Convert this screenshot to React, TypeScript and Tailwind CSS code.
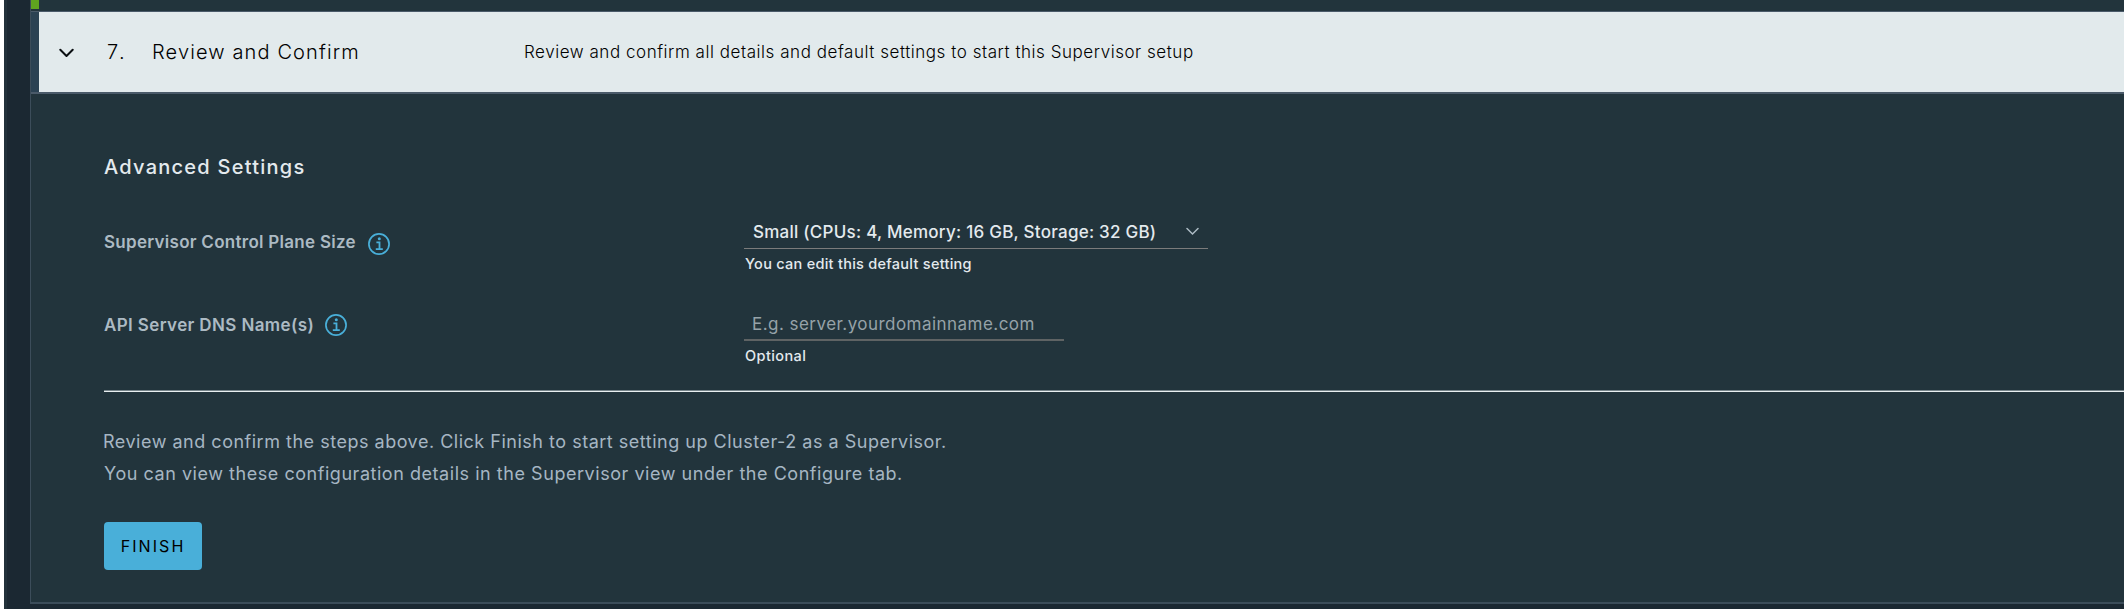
import type { ReactNode } from "react";

function InfoIcon() {
  return (
    <svg className="h-[22px] w-[22px] shrink-0" viewBox="0 0 22 22" fill="none" stroke="#49afd9">
      <circle cx="11" cy="11" r="10.1" strokeWidth="1.7" />
      <circle cx="11.3" cy="5.8" r="1.5" fill="#49afd9" stroke="none" />
      <path d="M8.4 9.4H11.5V16M7.8 16.2H14.8" strokeWidth="1.8" />
    </svg>
  );
}

function Label({ children, className }: { children: ReactNode; className: string }) {
  return <div className={`flex w-[640px] shrink-0 items-start text-[17px]/[20px] font-semibold text-[#acbac3] ${className}`}>{children}</div>;
}

export default function App() {
  return (
    <div className="h-[613px] w-full overflow-hidden bg-white pl-1 font-['Inter',sans-serif]">
      <div className="flex h-[609px] border-l-[3px] border-[#22313a] bg-[#1b2832]">
        <div className="w-[23px] shrink-0" />
        <div className="flex h-[604px] grow flex-col border-b-2 border-l border-[#3c4d5a] bg-[#22343c]">
          <div className="h-[12px] shrink-0 border-b border-[#4a5a69]">
            <div className="h-[9px] w-2 bg-[#5fa41f]" />
          </div>
          <div className="flex h-[82px] shrink-0 border-b-2 border-[#4a5a69] bg-[#e2eaec] text-black">
            <div className="w-2 bg-[#2b4253]" />
            <div className="flex grow items-center pl-5">
              <svg className="mt-[2px] h-[10px] w-[15px] shrink-0" viewBox="0 0 15 10" fill="none" stroke="#0b0f12" strokeWidth="2" strokeLinecap="round" strokeLinejoin="round">
                <path d="M1.3 1.8L7.5 8L13.7 1.8" />
              </svg>
              <span className="ml-[33px] w-[45px] shrink-0 text-[20px]/[28px] font-[350] tracking-[3.2px]">7.</span>
              <h2 className="w-[372px] shrink-0 text-[20px]/[28px] font-[350] tracking-[1.13px]">Review and Confirm</h2>
              <p className="text-[17px]/[28px] font-[350] tracking-[0.54px]">Review and confirm all details and default settings to start this Supervisor setup</p>
            </div>
          </div>
          <div className="flex grow flex-col pl-[73px] pt-[59px]">
            <h3 className="text-[20px]/[28px] font-[450] tracking-[1.25px] text-[#e4eaee]">Advanced Settings</h3>
            <div className="mt-[34px] flex h-[92px]">
              <Label className="pt-[17px]">
                <span className="tracking-[0.28px]">Supervisor Control Plane Size</span>
                <span className="ml-[12px] mt-[1px]"><InfoIcon /></span>
              </Label>
              <div>
                <div className="flex h-[34px] w-[464px] items-center justify-between border-b border-[#7b7b7b] pl-[9px] pr-[9px]">
                  <span className="pt-px text-[17px]/[33px] font-[450] tracking-[0.25px] text-[#e4eaee]">Small (CPUs: 4, Memory: 16 GB, Storage: 32 GB)</span>
                  <svg className="h-[9px] w-[13px]" viewBox="0 0 13 9" fill="none" stroke="#adbbc4" strokeWidth="1.5" strokeLinecap="round">
                    <path d="M1 1.5L6.5 7L12 1.5" />
                  </svg>
                </div>
                <p className="ml-px mt-[5px] text-[14.5px]/[20px] font-[450] tracking-[0.27px] text-[#e4eaee]">You can edit this default setting</p>
              </div>
            </div>
            <div className="flex h-[83px]">
              <Label className="pt-[8px]">
                <span className="tracking-[0.38px]">API Server DNS Name(s)</span>
                <span className="ml-[11px] -mt-[1px]"><InfoIcon /></span>
              </Label>
              <div>
                <input
                  className="block h-[34px] w-[320px] border-b-2 border-[#5f6364] bg-transparent pl-2 pt-px text-[17px] tracking-[0.46px] outline-none placeholder:text-[#96a2a8] placeholder:opacity-100"
                  placeholder="E.g. server.yourdomainname.com"
                />
                <p className="ml-px mt-[5px] text-[14.5px]/[20px] font-[450] tracking-[0.4px] text-[#e4eaee]">Optional</p>
              </div>
            </div>
            <div className="h-[2px] shrink-0 border-t border-[#76848a] bg-[#e8eef0]" />
            <div className="-ml-px mt-[34px] text-[18px]/[32px] text-[#a6b6c3]">
              <p className="tracking-[0.51px]">Review and confirm the steps above. Click Finish to start setting up Cluster-2 as a Supervisor.</p>
              <p className="pl-px tracking-[0.54px]">You can view these configuration details in the Supervisor view under the Configure tab.</p>
            </div>
            <button className="mt-[32px] h-[48px] w-[98px] rounded-[4px] bg-[#49afd9] text-[16px] tracking-[2.08px] text-black">FINISH</button>
          </div>
        </div>
      </div>
    </div>
  );
}
